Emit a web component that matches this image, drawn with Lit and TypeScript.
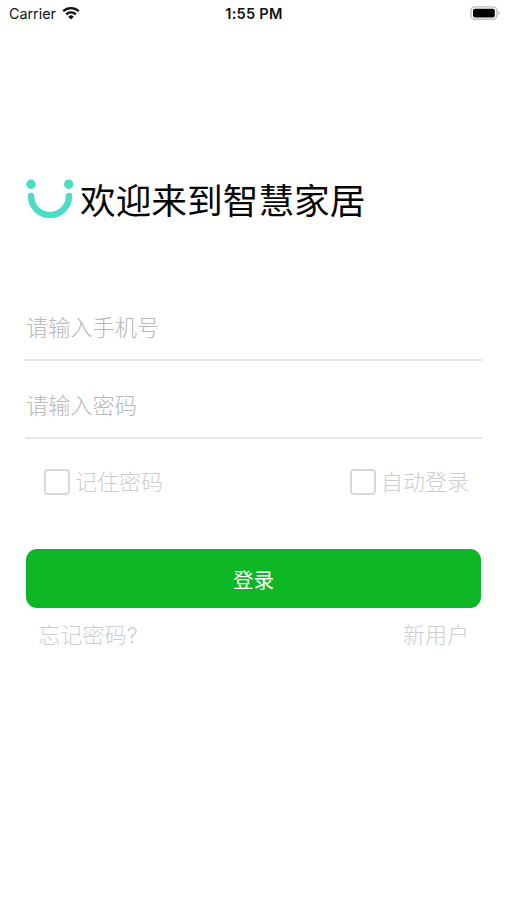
import { LitElement, html, css } from "lit";
import { customElement } from "lit/decorators.js";

@customElement("app-root")
export class AppRoot extends LitElement {
  static styles = css`
    :host { display: block; box-sizing: border-box; width: 507px; height: 900px; overflow: hidden; background: #fff; color: #111; font-family: Inter, "Noto Sans CJK SC", sans-serif; }
    * { box-sizing: border-box; }
    svg { display: block; flex: none; }
    .status { display: grid; grid-template-columns: 1fr auto 1fr; align-items: center; height: 28px; padding: 0 6px 0 9px; font-size: 14.3px; line-height: 28px; }
    .carrier { display: flex; align-items: center; gap: 6px; }
    .carrier svg { margin-top: -2px; }
    .time { font-weight: 600; font-size: 14.6px; letter-spacing: 0.25px; margin-right: 2px; }
    .battery { justify-self: end; margin-top: -2px; }
    .brand { display: flex; align-items: center; height: 50px; margin: 147px 0 0 25px; gap: 6px; }
    .title { margin: 1px 0 0; font-size: 35.7px; line-height: 50px; font-weight: 400; color: #060606; white-space: nowrap; }
    .form { margin: 71px 25px 0; }
    .field { height: 78px; padding: 30px 0 0 1px; border-bottom: 2px solid #e6e6e6; font-size: 22.2px; line-height: 30px; font-weight: 300; color: #b8b8b8; }
    .field:first-child { height: 65px; padding-top: 17px; }
    .options { display: flex; justify-content: space-between; padding: 0 13px 0 19px; margin-top: 27px; height: 32px; }
    .option { display: flex; align-items: center; gap: 5px; font-size: 22px; line-height: 32px; font-weight: 300; color: #cecece; }
    .box { width: 26px; height: 26px; border: 2px solid #d8d8d8; border-radius: 4px; }
    .login { display: block; width: 455px; height: 59px; margin: 51px 0 0 1px; border: 0; padding: 0; border-radius: 11px; background: #0db624; color: #fff; font: inherit; font-size: 20.5px; }
    .links { display: flex; justify-content: space-between; padding: 0 13px 0 13px; margin-top: 11px; font-size: 22px; line-height: 32px; font-weight: 300; color: #cecece; }
    .forgot { letter-spacing: 0.2px; }
  `;

  render() {
    return html`
      <header class="status">
        <div class="carrier"><span>Carrier</span>
          <svg width="18" height="14" viewBox="0 0 18 14"><path d="M1.2 5.2A11.4 11.4 0 0 1 16.8 5.2M4.1 8.3A7.2 7.2 0 0 1 13.9 8.3" fill="none" stroke="#111" stroke-width="2.3"/><path d="M6.2 10.7A4 4 0 0 1 11.8 10.7L9 13.6Z" fill="#111"/></svg>
        </div>
        <span class="time">1:55 PM</span>
        <svg class="battery" width="31" height="14" viewBox="0 0 31 14"><rect x=".9" y=".9" width="26" height="12.4" rx="4" fill="none" stroke="#bdbdbd" stroke-width="1.4"/><rect x="3" y="2.8" width="21.8" height="8.6" rx="2" fill="#000"/><path d="M28.4 4.7q2.6 2.3 0 4.6z" fill="#b5b5b5"/></svg>
      </header>
      <div class="brand">
        <svg width="49" height="42" viewBox="0 0 49 42"><circle cx="6" cy="5.2" r="4.7" fill="#4bdcc5"/><circle cx="43.7" cy="5.2" r="4.7" fill="#4bdcc5"/><path d="M6 17a19 19 0 0 0 38 0" fill="none" stroke="#4bdcc5" stroke-width="6.4" stroke-linecap="round"/></svg>
        <h1 class="title">欢迎来到智慧家居</h1>
      </div>
      <main class="form">
        <div class="field">请输入手机号</div>
        <div class="field">请输入密码</div>
        <div class="options">
          <label class="option"><span class="box"></span>记住密码</label>
          <label class="option"><span class="box"></span>自动登录</label>
        </div>
        <button class="login">登录</button>
        <div class="links"><span class="forgot">忘记密码?</span><span>新用户</span></div>
      </main>
    `;
  }
}
